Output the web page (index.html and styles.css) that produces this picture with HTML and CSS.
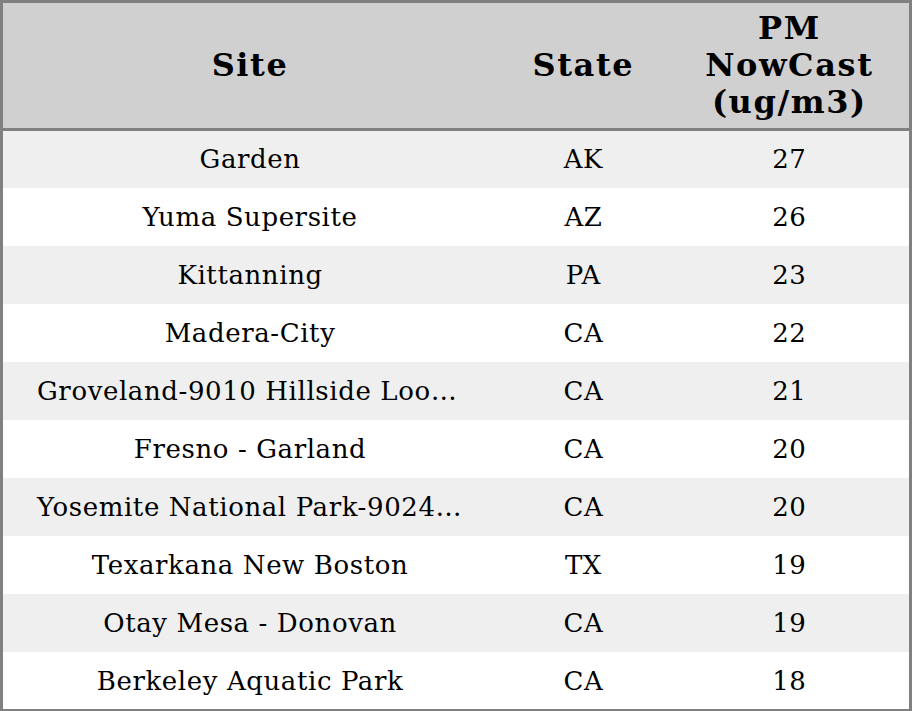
FILE: index.html
```html
<!DOCTYPE html>
<html>
<head>
<meta charset="utf-8">
<link rel="stylesheet" href="styles.css">
</head>
<body>
<table class="aq">
  <colgroup>
    <col class="c-site">
    <col class="c-state">
    <col class="c-pm">
  </colgroup>
  <thead>
    <tr><th>Site</th><th>State</th><th>PM<br>NowCast<br>(ug/m3)</th></tr>
  </thead>
  <tbody>
    <tr><td>Garden</td><td>AK</td><td>27</td></tr>
    <tr><td>Yuma Supersite</td><td>AZ</td><td>26</td></tr>
    <tr><td>Kittanning</td><td>PA</td><td>23</td></tr>
    <tr><td>Madera-City</td><td>CA</td><td>22</td></tr>
    <tr><td>Groveland-9010 Hillside Loop Road</td><td>CA</td><td>21</td></tr>
    <tr><td>Fresno - Garland</td><td>CA</td><td>20</td></tr>
    <tr><td>Yosemite National Park-9024 Turtleback Dome</td><td>CA</td><td>20</td></tr>
    <tr><td>Texarkana New Boston</td><td>TX</td><td>19</td></tr>
    <tr><td>Otay Mesa - Donovan</td><td>CA</td><td>19</td></tr>
    <tr><td>Berkeley Aquatic Park</td><td>CA</td><td>18</td></tr>
  </tbody>
</table>
</body>
</html>
```
FILE: styles.css
```css
html, body {
  margin: 0;
  padding: 0;
  background: #ffffff;
}
.aq {
  width: 912px;
  border-collapse: collapse;
  table-layout: fixed;
  border: 3px solid #808080;
  font-family: "DejaVu Serif", serif;
  color: #000;
}
.c-site { width: 494px; }
.c-state { width: 172px; }
.c-pm { width: 240px; }
.aq th {
  background: #d0d0d0;
  font-size: 32px;
  font-weight: bold;
  letter-spacing: 1.6px;
  line-height: 37px;
  height: 128px;
  padding: 0 8px;
  box-sizing: border-box;
  text-align: center;
  vertical-align: middle;
  border-bottom: 3px solid #808080;
}
.aq td {
  font-size: 26px;
  letter-spacing: 0.6px;
  height: 58.1px;
  padding: 0 34px;
  box-sizing: border-box;
  text-align: center;
  vertical-align: middle;
  white-space: nowrap;
  overflow: hidden;
  text-overflow: ellipsis;
}
.aq tbody tr:nth-child(odd) td {
  background: #efefef;
}
```
